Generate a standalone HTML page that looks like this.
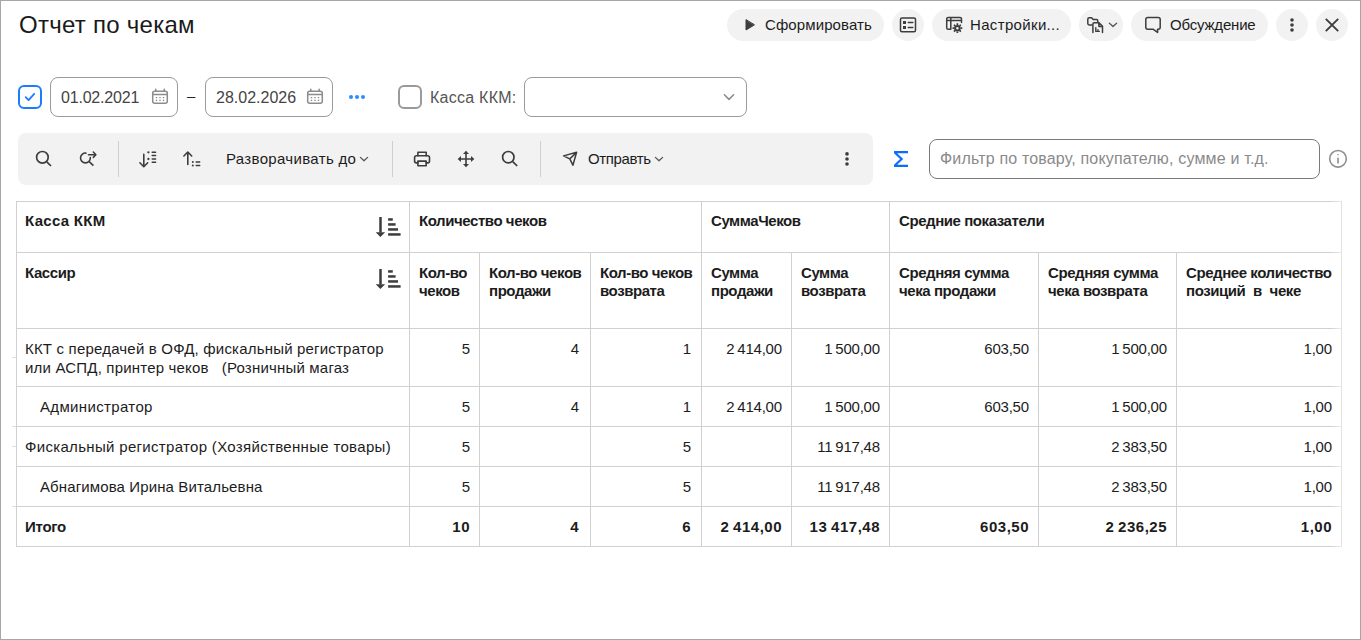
<!DOCTYPE html>
<html lang="ru"><head><meta charset="utf-8"><title>Отчет по чекам</title>
<style>
html,body{margin:0;padding:0}
body{width:1361px;height:640px;position:relative;overflow:hidden;background:#fff;font-family:"Liberation Sans",sans-serif;color:#1c1c1c;font-size:15px}
.a{position:absolute}
.frame{left:0;top:0;width:1359px;height:638px;border:1px solid #a6a6a6;box-sizing:content-box}
.t{position:absolute;white-space:nowrap;line-height:18px;font-size:15px}
.t16{position:absolute;white-space:nowrap;line-height:20px;font-size:16px}
.btn{position:absolute;top:9px;height:32px;border-radius:16px;background:#f2f2f2}
.inp{position:absolute;height:38px;border:1px solid #9a9a9a;border-radius:8px;background:#fff}
.cb{position:absolute;width:20px;height:20px;border:2px solid #9a9a9a;border-radius:6px;background:#fff}
svg{position:absolute;overflow:visible}
.sep{position:absolute;top:141px;width:1px;height:36px;background:#cfcfcf}
.vl{position:absolute;width:1px;background:#d0d0d0}
.hl{position:absolute;height:1px;background:#d0d0d0}
.b{font-weight:700;letter-spacing:-.43px}
.n{word-spacing:-.8px;letter-spacing:-.25px;margin-right:.25px}
.n.b{letter-spacing:.5px;margin-right:0}
.r{text-align:right}
</style></head><body>
<div class="a frame"></div>

<!-- title -->
<div class="a" id="title" style="left:19px;top:11px;font-size:24px;line-height:28px;white-space:nowrap;letter-spacing:.27px;color:#1a1a1a">Отчет по чекам</div>

<!-- header buttons -->
<div class="btn" style="left:727px;width:157px"></div>
<div class="btn" style="left:892px;width:32px"></div>
<div class="btn" style="left:932px;width:139px"></div>
<div class="btn" style="left:1079px;width:44px"></div>
<div class="btn" style="left:1131px;width:137px"></div>
<div class="btn" style="left:1276px;width:32px"></div>
<div class="btn" style="left:1316px;width:32px"></div>
<div class="t" style="left:765px;top:16px;letter-spacing:.1px">Сформировать</div>
<div class="t" style="left:970px;top:16px;letter-spacing:.34px">Настройки...</div>
<div class="t" style="left:1170px;top:16px;letter-spacing:-.19px">Обсуждение</div>

<!-- filter row -->
<div class="cb" style="left:18px;top:85px;border-color:#1a7dff"></div>
<div class="inp" style="left:50px;top:77px;width:126px"></div>
<div class="t16" style="left:61px;top:88px;color:#444;letter-spacing:-.2px">01.02.2021</div>
<div class="t16" style="left:187px;top:86px;color:#222;font-size:15px">–</div>
<div class="inp" style="left:205px;top:77px;width:126px"></div>
<div class="t16" style="left:216px;top:88px;color:#444;letter-spacing:0">28.02.2026</div>
<div class="cb" style="left:398px;top:85px"></div>
<div class="t16" style="left:430px;top:88px;color:#555;letter-spacing:.26px">Касса ККМ:</div>
<div class="inp" style="left:524px;top:77px;width:221px"></div>

<!-- toolbar -->
<div class="a" style="left:18px;top:133px;width:855px;height:52px;border-radius:8px;background:#f2f2f2"></div>
<div class="sep" style="left:118px"></div>
<div class="sep" style="left:392px"></div>
<div class="sep" style="left:540px"></div>
<div class="t" style="left:226px;top:150px;letter-spacing:.33px">Разворачивать до</div>
<div class="t" style="left:588px;top:150px;letter-spacing:-.36px">Отправть</div>
<div class="inp" style="left:929px;top:139px;width:389px;border-color:#7a7a7a"></div>
<div class="t16" style="left:940px;top:149px;color:#8a8a8a;letter-spacing:.17px">Фильтр по товару, покупателю, сумме и т.д.</div>

<!--ICONS-->
<svg class="a" style="left:0;top:0" width="1361" height="640" viewBox="0 0 1361 640" fill="none" stroke="#3d3d3d" stroke-width="1.6" stroke-linecap="round" stroke-linejoin="round">
<!-- play -->
<path d="M746 20 L746 30 L754.2 25 Z" fill="#3d3d3d" stroke-width="1"/>
<!-- form list icon -->
<rect x="900.5" y="18.1" width="15" height="13.6" rx="1.5" stroke-width="1.5"/>
<rect x="903" y="21" width="3" height="3" fill="#3d3d3d" stroke="none"/>
<rect x="903" y="26" width="3" height="3" fill="#3d3d3d" stroke="none"/>
<path d="M908.2 22.5H912.8M908.2 27.5H912.8" stroke-width="1.5"/>
<!-- settings table + gear -->
<path d="M950.8 29.2H948.2Q946.7 29.2 946.7 27.7V19Q946.7 17.5 948.2 17.5H960Q961.5 17.5 961.5 19V22.6M946.7 20.4H961.5M950.8 17.5V29.2" stroke-width="1.5"/>
<g><circle cx="957.4" cy="28.2" r="2.3" stroke-width="2"/>
<path d="M960.60 28.20L962.30 28.20M959.66 30.46L960.86 31.66M957.40 31.40L957.40 33.10M955.14 30.46L953.94 31.66M954.20 28.20L952.50 28.20M955.14 25.94L953.94 24.74M957.40 25.00L957.40 23.30M959.66 25.94L960.86 24.74" stroke-width="1.7" stroke-linecap="butt"/></g>
<!-- folder/doc icon -->
<path d="M1091.8 25H1089.2Q1087.8 25 1087.8 23.6V19.2Q1087.8 17.8 1089.2 17.8H1091.6L1093.4 19.6H1096.4Q1097.8 19.6 1097.8 21V22" stroke-width="1.5"/>
<path d="M1092.9 32.4V24Q1092.9 22.7 1094.2 22.7H1099L1102.5 26.3V32.4M1098.9 23V26.4H1102.3" stroke-width="1.5"/>
<path d="M1095.8 27.6V31.4H1099.3M1098 29.8V31.4" stroke-width="1.4"/>
<path d="M1109.4 23.2L1113 26.5L1116.6 23.2" stroke="#555" stroke-width="1.3"/>
<!-- speech bubble -->
<path d="M1147.8 17.6H1158.2Q1160.2 17.6 1160.2 19.6V27.2Q1160.2 29.2 1158.2 29.2H1157.6V32.4L1153 29.2H1147.8Q1145.8 29.2 1145.8 27.2V19.6Q1145.8 17.6 1147.8 17.6Z" stroke-width="1.5"/>
<!-- kebab top -->
<g fill="#3d3d3d" stroke="none"><circle cx="1292" cy="20" r="1.8"/><circle cx="1292" cy="25" r="1.8"/><circle cx="1292" cy="30" r="1.8"/></g>
<!-- close X -->
<path d="M1325.8 18.8L1338.2 31.2M1338.2 18.8L1325.8 31.2" stroke-width="1.9" stroke-linecap="butt"/>
<!-- checkbox check -->
<path d="M25.7 97.2L28.6 100.1L34.2 93.9" stroke="#1a7dff" stroke-width="1.8"/>
<!-- calendars -->
<g stroke="#8c8c8c" stroke-width="1.5"><rect x="152.7" y="91.2" width="14.6" height="12.1" rx="2"/><path d="M152.7 94.6H167.3M155.8 89.3V91M164.2 89.3V91" /><path d="M156.5 97.6h.01M160 97.6h.01M163.5 97.6h.01M156.5 100.4h.01M160 100.4h.01M163.5 100.4h.01" stroke-width="1.4" stroke-linecap="square"/></g>
<g transform="translate(155 0)" stroke="#8c8c8c" stroke-width="1.5"><rect x="152.7" y="91.2" width="14.6" height="12.1" rx="2"/><path d="M152.7 94.6H167.3M155.8 89.3V91M164.2 89.3V91" /><path d="M156.5 97.6h.01M160 97.6h.01M163.5 97.6h.01M156.5 100.4h.01M160 100.4h.01M163.5 100.4h.01" stroke-width="1.4" stroke-linecap="square"/></g>
<!-- blue dots -->
<g fill="#2b8cff" stroke="none"><circle cx="351" cy="97" r="2"/><circle cx="357" cy="97" r="2"/><circle cx="363" cy="97" r="2"/></g>
<!-- dropdown chevron -->
<path d="M724.4 94.8L729 99.4L733.6 94.8" stroke="#8a8a8a" stroke-width="1.5"/>
<!-- toolbar: search 1 -->
<circle cx="42.4" cy="157.3" r="5.8" stroke-width="1.7"/><path d="M46.8 161.8L51 166" stroke-width="1.7" stroke-linecap="butt"/>
<!-- search with arrow -->
<path d="M85.9 153.1A4.9 4.9 0 1 0 90.3 157.6" stroke-width="1.6"/><path d="M89.2 161.7L93.4 165.7" stroke-width="1.6" stroke-linecap="butt"/>
<path d="M88.4 154.8H95.6M93.3 152.1L95.9 154.8L93.3 157.4" stroke-width="1.5"/>
<!-- sort down list -->
<path d="M143.8 154.4V166.4M139.9 162.8L143.8 166.7L147.7 162.8" stroke-width="1.6"/>
<g fill="#3d3d3d" stroke="none"><circle cx="148.4" cy="152.3" r="1.15"/><circle cx="148.4" cy="159" r="1.15"/></g>
<path d="M152.2 152.3H155.6M152.2 155.6H155.6M152.2 159H155.6M152.2 162.3H155.6" stroke-width="1.5"/>
<!-- sort up list -->
<path d="M187.8 152.2V164.4M183.9 156L187.8 152L191.7 156" stroke-width="1.6"/>
<g fill="#3d3d3d" stroke="none"><circle cx="192.8" cy="162.1" r="1"/><circle cx="192.8" cy="165.6" r="1"/></g>
<path d="M196.2 162.1H199.7M196.2 165.6H199.7" stroke-width="1.5"/>
<!-- chevrons toolbar -->
<path d="M360.4 157.4L364 160.8L367.6 157.4" stroke="#555" stroke-width="1.3"/>
<path d="M655.4 157.4L659 160.8L662.6 157.4" stroke="#555" stroke-width="1.3"/>
<!-- printer -->
<path d="M417.9 155.8V152.3H426.2V155.8" stroke-width="1.6"/>
<path d="M417.9 162.9H416.4Q414.6 162.9 414.6 161.1V157.6Q414.6 155.8 416.4 155.8H427.7Q429.5 155.8 429.5 157.6V161.1Q429.5 162.9 427.7 162.9H426.2" stroke-width="1.6"/>
<rect x="417.9" y="161.1" width="8.3" height="4.6" stroke-width="1.6"/>
<!-- move -->
<path d="M459.5 159H472.5M466 152.5V165.5" stroke-width="1.6"/>
<g fill="#3d3d3d" stroke="none"><path d="M457.7 159L461 156V162Z"/><path d="M474.3 159L471 156V162Z"/><path d="M466 150.7L463 154H469Z"/><path d="M466 167.2L463 164H469Z"/></g>
<!-- search 3 -->
<circle cx="508.3" cy="157.2" r="5.7" stroke-width="1.7"/><path d="M512.7 161.7L517.2 166" stroke-width="1.7" stroke-linecap="butt"/>
<!-- send -->
<path d="M563.6 155.9L576.6 152.3L572.9 165.2L569.8 158.9Z M569.8 158.9L576.6 152.3" stroke-width="1.5"/>
<!-- toolbar kebab -->
<g fill="#3d3d3d" stroke="none"><circle cx="847" cy="153.9" r="1.8"/><circle cx="847" cy="159" r="1.8"/><circle cx="847" cy="164" r="1.8"/></g>
<!-- sigma -->
<path d="M894 151H908V153.2H897.1L903.2 159L897.1 164.8H908V167H894V164.8L900.1 159L894 153.2Z" fill="#0b6cff" stroke="none"/>
<!-- info -->
<circle cx="1338" cy="158.8" r="8.3" stroke="#8f8f8f" stroke-width="1.6"/>
<path d="M1338 157.8V163.6M1338 154.3V155.3" stroke="#8c8c8c" stroke-width="1.6" stroke-linecap="butt"/>
<!-- table sort icons -->
<g fill="#3d3d3d" stroke="none"><rect x="379.25" y="217" width="2.5" height="15.5"/><path d="M375.7 232.2H385.1L380.4 236.9Z"/><rect x="388.1" y="218.2" width="4.7" height="2.5"/><rect x="388.1" y="223.2" width="7.5" height="2.5"/><rect x="388.1" y="228.2" width="9.9" height="2.5"/><rect x="388.1" y="233.2" width="12.5" height="2.5"/></g>
<g transform="translate(0 52)" fill="#3d3d3d" stroke="none"><rect x="379.25" y="217" width="2.5" height="15.5"/><path d="M375.7 232.2H385.1L380.4 236.9Z"/><rect x="388.1" y="218.2" width="4.7" height="2.5"/><rect x="388.1" y="223.2" width="7.5" height="2.5"/><rect x="388.1" y="228.2" width="9.9" height="2.5"/><rect x="388.1" y="233.2" width="12.5" height="2.5"/></g>
</svg>

<!--/ICONS-->
<!-- TABLE -->
<!--TBL-->
<div class="hl" style="left:16px;top:201px;width:1326px"></div>
<div class="hl" style="left:16px;top:252px;width:1326px"></div>
<div class="hl" style="left:16px;top:328px;width:1326px"></div>
<div class="hl" style="left:16px;top:386px;width:1326px"></div>
<div class="hl" style="left:16px;top:426px;width:1326px"></div>
<div class="hl" style="left:16px;top:466px;width:1326px"></div>
<div class="hl" style="left:16px;top:506px;width:1326px"></div>
<div class="hl" style="left:16px;top:546px;width:1326px"></div>
<div class="vl" style="left:16px;top:201px;height:346px"></div>
<div class="vl" style="left:409px;top:201px;height:346px"></div>
<div class="vl" style="left:479px;top:252px;height:295px"></div>
<div class="vl" style="left:590px;top:252px;height:295px"></div>
<div class="vl" style="left:701px;top:201px;height:346px"></div>
<div class="vl" style="left:791px;top:252px;height:295px"></div>
<div class="vl" style="left:889px;top:201px;height:346px"></div>
<div class="vl" style="left:1038px;top:252px;height:295px"></div>
<div class="vl" style="left:1176px;top:252px;height:295px"></div>
<div class="vl" style="left:1341px;top:201px;height:346px"></div>
<div class="a" style="left:1330px;top:195px;width:11px;height:356px;background:linear-gradient(to right,rgba(255,255,255,0),rgba(255,255,255,.55))"></div>
<div class="vl" style="left:1341px;top:201px;height:346px;background:#e2e2e2"></div>
<div class="hl" style="left:12px;top:357px;width:4px;background:#e0e0e0"></div>
<div class="hl" style="left:12px;top:446px;width:4px;background:#e0e0e0"></div>
<div class="hl" style="left:12px;top:426px;width:4px;background:#e0e0e0"></div>
<div class="hl" style="left:12px;top:506px;width:4px;background:#e0e0e0"></div>
<div class="t b" style="left:25px;top:212px;letter-spacing:.3px">Касса ККМ</div>
<div class="t b" style="left:419px;top:212px;">Количество чеков</div>
<div class="t b" style="left:711px;top:212px;">СуммаЧеков</div>
<div class="t b" style="left:899px;top:212px;">Средние показатели</div>
<div class="t b" style="left:25px;top:264px;">Кассир</div>
<div class="t b" style="left:419px;top:264px;">Кол-во<br>чеков</div>
<div class="t b" style="left:489px;top:264px;">Кол-во чеков<br>продажи</div>
<div class="t b" style="left:600px;top:264px;">Кол-во чеков<br>возврата</div>
<div class="t b" style="left:711px;top:264px;">Сумма<br>продажи</div>
<div class="t b" style="left:801px;top:264px;">Сумма<br>возврата</div>
<div class="t b" style="left:899px;top:264px;">Средняя сумма<br>чека продажи</div>
<div class="t b" style="left:1048px;top:264px;">Средняя сумма<br>чека возврата</div>
<div class="t b" style="left:1186px;top:264px;">Среднее количество<br><span style="word-spacing:4px">позиций в чеке</span></div>
<div class="t " style="left:25px;top:339px;letter-spacing:.19px;line-height:19px">ККТ с передачей в ОФД, фискальный регистратор<br>или АСПД, принтер чеков &nbsp; (Розничный магаз</div>
<div class="t " style="left:40px;top:398px;letter-spacing:.35px">Администратор</div>
<div class="t " style="left:25px;top:438px;letter-spacing:.32px">Фискальный регистратор (Хозяйственные товары)</div>
<div class="t " style="left:40px;top:478px;letter-spacing:.12px">Абнагимова Ирина Витальевна</div>
<div class="t b" style="left:25px;top:518px;letter-spacing:-.26px">Итого</div>
<div class="t r  n" style="right:891px;top:340px;">5</div>
<div class="t r  n" style="right:782px;top:340px;">4</div>
<div class="t r  n" style="right:670px;top:340px;">1</div>
<div class="t r  n" style="right:579px;top:340px;">2 414,00</div>
<div class="t r  n" style="right:481px;top:340px;">1 500,00</div>
<div class="t r  n" style="right:332px;top:340px;">603,50</div>
<div class="t r  n" style="right:194px;top:340px;">1 500,00</div>
<div class="t r  n" style="right:29px;top:340px;">1,00</div>
<div class="t r  n" style="right:891px;top:398px;">5</div>
<div class="t r  n" style="right:782px;top:398px;">4</div>
<div class="t r  n" style="right:670px;top:398px;">1</div>
<div class="t r  n" style="right:579px;top:398px;">2 414,00</div>
<div class="t r  n" style="right:481px;top:398px;">1 500,00</div>
<div class="t r  n" style="right:332px;top:398px;">603,50</div>
<div class="t r  n" style="right:194px;top:398px;">1 500,00</div>
<div class="t r  n" style="right:29px;top:398px;">1,00</div>
<div class="t r  n" style="right:891px;top:438px;">5</div>
<div class="t r  n" style="right:670px;top:438px;">5</div>
<div class="t r  n" style="right:481px;top:438px;">11 917,48</div>
<div class="t r  n" style="right:194px;top:438px;">2 383,50</div>
<div class="t r  n" style="right:29px;top:438px;">1,00</div>
<div class="t r  n" style="right:891px;top:478px;">5</div>
<div class="t r  n" style="right:670px;top:478px;">5</div>
<div class="t r  n" style="right:481px;top:478px;">11 917,48</div>
<div class="t r  n" style="right:194px;top:478px;">2 383,50</div>
<div class="t r  n" style="right:29px;top:478px;">1,00</div>
<div class="t r b n" style="right:891px;top:518px;">10</div>
<div class="t r b n" style="right:782px;top:518px;">4</div>
<div class="t r b n" style="right:670px;top:518px;">6</div>
<div class="t r b n" style="right:579px;top:518px;">2 414,00</div>
<div class="t r b n" style="right:481px;top:518px;">13 417,48</div>
<div class="t r b n" style="right:332px;top:518px;">603,50</div>
<div class="t r b n" style="right:194px;top:518px;">2 236,25</div>
<div class="t r b n" style="right:29px;top:518px;">1,00</div>
<!--/TBL-->
</body></html>
